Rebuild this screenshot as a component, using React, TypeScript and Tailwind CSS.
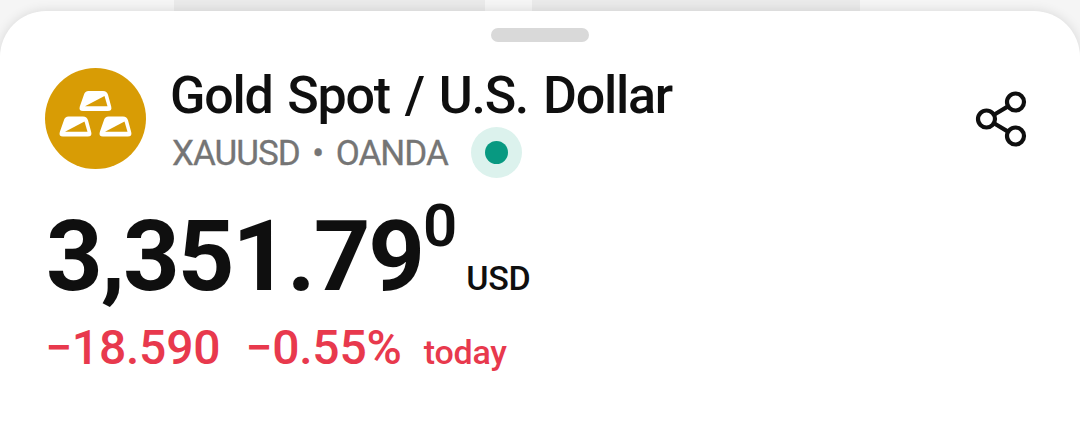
function GoldIcon() {
  return (
    <svg width="101" height="101" viewBox="0 0 101 101" className="shrink-0">
      <circle cx="50.5" cy="50.5" r="50.5" fill="#d89c05" />
      <GoldBar x={34.5} y={23} />
      <GoldBar x={14.5} y={48.5} />
      <GoldBar x={54.5} y={48.5} />
    </svg>
  );
}

function GoldBar({ x, y }: { x: number; y: number }) {
  return (
    <g transform={`translate(${x} ${y})`}>
      <path
        d="M9 0h14.5q4 0 5 3.8l3.2 11.7q1.2 4.5-3.5 4.5H3.5q-4.5 0-3.2-4.5L4.5 3.5Q5.5 0 9 0Z"
        fill="#fff"
      />
      <path d="M5.5 15.3 25 5 28 15.3Z" fill="#d89c05" />
    </g>
  );
}

function ShareIcon() {
  return (
    <svg
      width="52"
      height="56"
      viewBox="0 0 52 56"
      fill="none"
      stroke="#0f0f0f"
      strokeWidth="4.2"
    >
      <circle cx="11.5" cy="28" r="8.5" />
      <circle cx="40.5" cy="11" r="8.5" />
      <circle cx="40.5" cy="45" r="8.5" />
      <path d="m19 23.7 14-8.3M19 32.3l14 8.3" />
    </svg>
  );
}

function Header() {
  return (
    <div className="flex items-start pl-[45px] pr-[53px]">
      <div className="mt-[3px]">
        <GoldIcon />
      </div>
      <div className="ml-6 flex flex-col pt-px">
        <h1 className="text-[52px] leading-[60px] font-medium tracking-[-1.25px] [word-spacing:3.2px] whitespace-nowrap">
          Gold Spot / U.S. Dollar
        </h1>
        <div className="flex h-[53px] items-center pl-0.5">
          <span className="pt-0.5 text-[35px] leading-[52px] tracking-[-1px] [word-spacing:5px] whitespace-nowrap text-[#757575] [-webkit-text-stroke:0.3px_#757575]">
            XAUUSD • OANDA
          </span>
          <span className="ml-[23px] flex size-[51px] items-center justify-center rounded-full bg-[#dcf2ed]">
            <span className="size-[23px] rounded-full bg-[#089981]" />
          </span>
        </div>
      </div>
      <button className="mt-[26px] ml-auto" aria-label="Share">
        <ShareIcon />
      </button>
    </div>
  );
}

function Price() {
  return (
    <div className="mt-[17px] flex items-start pl-[46px]">
      <span className="mt-2.5 text-[99px] leading-[100px] font-bold tracking-[-2.1px]">
        3,351.79
      </span>
      <span className="text-[60px] leading-[60px] font-semibold">0</span>
      <span className="mt-[62px] ml-[9px] text-[34px] leading-[40px] font-medium tracking-[-0.4px]">
        USD
      </span>
    </div>
  );
}

function Change() {
  return (
    <div className="mt-3.5 flex items-baseline pl-[45px] text-[48px] leading-[56px] font-medium tracking-[-0.2px] whitespace-nowrap text-[#e8394d]">
      <span>−18.590</span>
      <span className="ml-[25px]">−0.55%</span>
      <span className="ml-[22px] text-[34px]">today</span>
    </div>
  );
}

export default function App() {
  return (
    <div className="relative h-[442px] w-[1080px] overflow-hidden bg-[#f5f5f5] pt-[11px] font-['Roboto',sans-serif] text-[#0f0f0f]">
      <div className="absolute top-0 left-[174px] flex gap-[47px]">
        <div className="h-8 w-[311px] rounded-b-lg bg-[#eaeaea]" />
        <div className="h-8 w-[328px] rounded-b-lg bg-[#eaeaea]" />
      </div>
      <div className="relative h-[460px] rounded-t-[46px] bg-white pt-[17px] shadow-[0_0_12px_rgba(0,0,0,0.12)]">
        <div className="mx-auto h-3.5 w-[98px] rounded-full bg-[#d9d9d9]" />
        <div className="mt-[23px]">
          <Header />
          <Price />
          <Change />
        </div>
      </div>
    </div>
  );
}
